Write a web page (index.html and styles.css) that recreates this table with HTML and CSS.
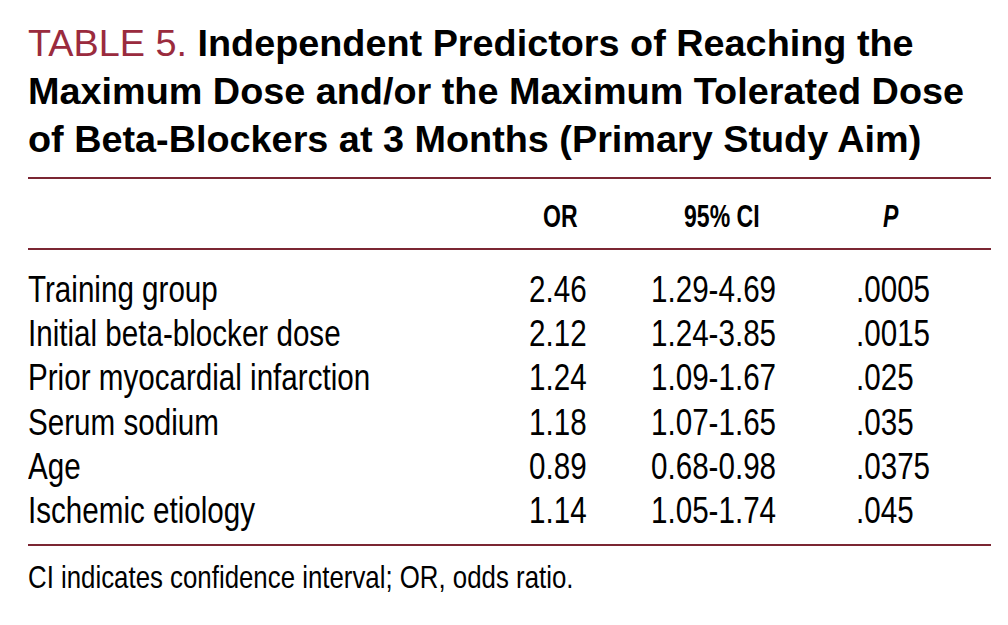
FILE: index.html
```html
<!DOCTYPE html>
<html>
<head>
<meta charset="utf-8">
<link rel="stylesheet" href="styles.css">
</head>
<body>
<div class="page">
  <h1 class="title"><span class="label">TABLE 5.</span> Independent Predictors of Reaching the Maximum Dose and/or the Maximum Tolerated Dose of Beta-Blockers at 3 Months (Primary Study Aim)</h1>
  <div class="table">
    <div class="row head">
      <div class="name"></div>
      <div class="c-or"><span class="cn">OR</span></div>
      <div class="c-ci"><span class="cn">95% CI</span></div>
      <div class="c-p"><span class="cn"><i>P</i></span></div>
    </div>
    <div class="body">
      <div class="row"><div class="name"><span class="cn">Training group</span></div><div class="c-or"><span class="cn">2.46</span></div><div class="c-ci"><span class="cn">1.29-4.69</span></div><div class="c-p"><span class="cn">.0005</span></div></div>
      <div class="row"><div class="name"><span class="cn">Initial beta-blocker dose</span></div><div class="c-or"><span class="cn">2.12</span></div><div class="c-ci"><span class="cn">1.24-3.85</span></div><div class="c-p"><span class="cn">.0015</span></div></div>
      <div class="row"><div class="name"><span class="cn">Prior myocardial infarction</span></div><div class="c-or"><span class="cn">1.24</span></div><div class="c-ci"><span class="cn">1.09-1.67</span></div><div class="c-p"><span class="cn">.025</span></div></div>
      <div class="row"><div class="name"><span class="cn">Serum sodium</span></div><div class="c-or"><span class="cn">1.18</span></div><div class="c-ci"><span class="cn">1.07-1.65</span></div><div class="c-p"><span class="cn">.035</span></div></div>
      <div class="row"><div class="name"><span class="cn">Age</span></div><div class="c-or"><span class="cn">0.89</span></div><div class="c-ci"><span class="cn">0.68-0.98</span></div><div class="c-p"><span class="cn">.0375</span></div></div>
      <div class="row"><div class="name"><span class="cn">Ischemic etiology</span></div><div class="c-or"><span class="cn">1.14</span></div><div class="c-ci"><span class="cn">1.05-1.74</span></div><div class="c-p"><span class="cn">.045</span></div></div>
    </div>
  </div>
  <p class="note"><span class="cn note-cn">CI indicates confidence interval; OR, odds ratio.</span></p>
</div>
</body>
</html>
```

FILE: styles.css
```css
html, body {
  margin: 0;
  padding: 0;
  background: #ffffff;
}
.page {
  width: 963px;
  padding: 19px 0 0 28px;
  color: #000;
  font-family: "Liberation Sans", Arial, sans-serif;
}
.title {
  margin: 0;
  max-width: 958px;
  font-weight: bold;
  font-size: 37.8px;
  line-height: 48px;
}
.label {
  color: #9a2b3e;
  font-weight: normal;
}
.table {
  margin-top: 14px;
  border-top: 2px solid #7b2633;
  border-bottom: 2px solid #7b2633;
}
.cn {
  display: inline-block;
  white-space: nowrap;
  transform: scaleX(0.8);
  transform-origin: 0 50%;
}
.row {
  display: grid;
  grid-template-columns: 501px 122px 205px 135px;
  font-size: 37px;
  line-height: 44.2px;
}
.head {
  height: 71px;
  border-bottom: 2px solid #7b2633;
  font-weight: bold;
  font-size: 32px;
  line-height: 33px;
  align-items: end;
  box-sizing: border-box;
}
.head .cn {
  transform: scaleX(0.72);
}
.head > div {
  padding-bottom: 15px;
}
.head .c-or { padding-left: 14px; }
.head .c-ci { padding-left: 33px; }
.head .c-p { padding-left: 27px; }
.body {
  padding: 18px 0 11px;
}
.note {
  margin: 11px 0 0;
  font-size: 32px;
  line-height: 40px;
}
.note .note-cn {
  transform: scaleX(0.807);
}
```
